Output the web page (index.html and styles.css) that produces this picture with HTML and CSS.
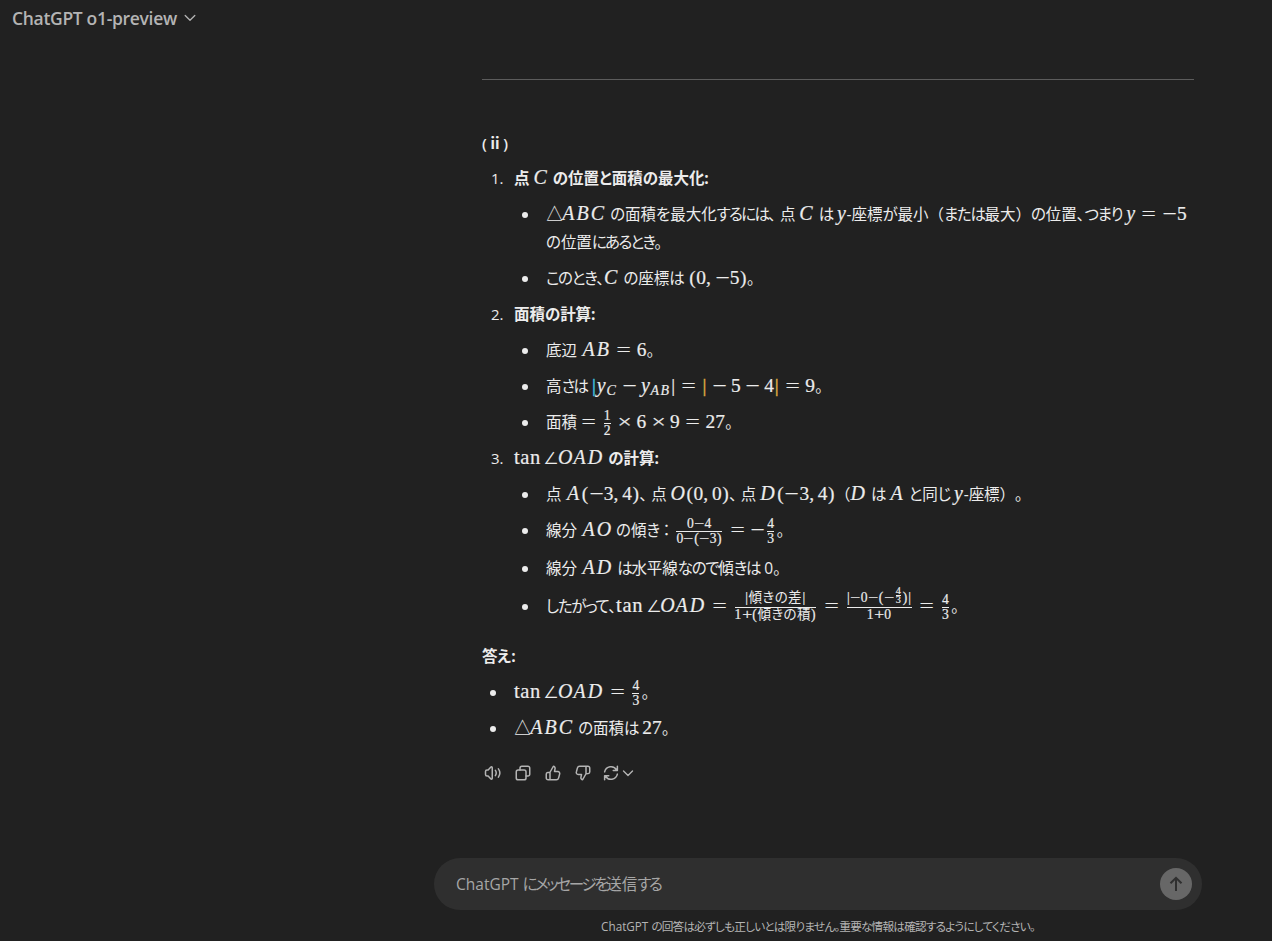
FILE: index.html
```
<!DOCTYPE html>
<html lang="ja">
<head>
  <meta charset="utf-8">
  <title>ChatGPT</title>
  <link rel="stylesheet" href="styles.css">
</head>
<body>
  <header class="header">
    <span class="model">ChatGPT o1-preview</span>
    <svg class="chevron" width="12" height="12" viewBox="0 0 12 12"><path d="M1.2 3.5 6 8.3l4.8-4.8"/></svg>
  </header>

  <main class="answer">
    <hr>
    <p class="line"><b class="roman">( <span>ⅱ</span> )</b></p>

    <ol class="steps">
      <li>
        <div class="line"><b>点 <span class="m"><i>C</i></span> の位置と面積の最大化:</b></div>
        <ul>
          <li>
            <div class="line"><span class="m"><span class="sym">△</span><i>ABC</i></span> の面積を最大化<span class="k wide">するには</span><span class="c">、</span>点 <span class="m"><i>C</i></span> <span class="k">は</span> <span class="m"><i class="y">y</i></span>-座標が最小<span class="full">（</span><span class="k">または</span>最大<span class="full">）</span>の位置、<span class="k">つまり</span> <span class="m"><i class="y">y</i><span class="rel">=</span><span class="neg">−</span>5</span></div>
            <div class="line">の位置<span class="k wide">にあるとき</span>。</div>
          </li>
          <li><div class="line"><span class="k">このとき</span>、<span class="m"><i>C</i></span> の座標は <span class="m"><span class="par">(</span>0<span class="comma">,</span><span class="neg">−</span>5<span class="par">)</span></span>。</div></li>
        </ul>
      </li>
      <li>
        <div class="line"><b>面積の計算:</b></div>
        <ul>
          <li><div class="line">底辺 <span class="m cap"><i>AB</i><span class="rel">=</span>6</span>。</div></li>
          <li><div class="line">高<span class="k wide">さは</span> <span class="m"><span class="bar cool">|</span><i class="y">y</i><sub><i>C</i></sub><span class="bin">−</span><i class="y">y</i><sub><i>AB</i></sub><span class="bar">|</span><span class="rel">=</span><span class="bar warm">|</span><span class="bin">−</span>5<span class="bin">−</span>4<span class="bar warm">|</span><span class="rel">=</span>9</span>。</div></li>
          <li><div class="line">面積 <span class="m"><span class="rel first">=</span><span class="frac"><span>1</span><span>2</span></span><span class="bin">×</span>6<span class="bin">×</span>9<span class="rel">=</span>27</span>。</div></li>
        </ul>
      </li>
      <li>
        <div class="line"><b><span class="m"><span class="fn">tan</span><span class="sym ang">∠</span><i><span class="o">O</span>AD</i></span> の計算:</b></div>
        <ul class="loose">
          <li><div class="line">点 <span class="m cap"><i>A</i><span class="par">(</span><span class="neg">−</span>3<span class="comma">,</span>4<span class="par">)</span></span><span class="c">、</span>点 <span class="m"><i><span class="o">O</span></i><span class="par">(</span>0<span class="comma">,</span>0<span class="par">)</span></span><span class="c">、</span>点 <span class="m"><i>D</i><span class="par">(</span><span class="neg">−</span>3<span class="comma">,</span>4<span class="par">)</span></span><span class="full">（</span><span class="m"><i>D</i></span> は <span class="m"><i>A</i></span> と同<span class="k">じ</span> <span class="m"><i class="y">y</i></span>-座標<span class="full">）。</span></div></li>
          <li><div class="line">線分 <span class="m cap"><i>A<span class="o">O</span></i></span> の傾<span class="k">き</span><span class="full">：</span><span class="m"><span class="frac"><span>0<span class="neg">−</span>4</span><span>0<span class="neg">−</span><span class="par">(</span><span class="neg">−</span>3<span class="par">)</span></span></span><span class="rel">=</span><span class="neg">−</span><span class="frac"><span>4</span><span>3</span></span></span>。</div></li>
          <li><div class="line">線分 <span class="m cap"><i>AD</i></span> <span class="k">は</span>水平線<span class="k">なので</span>傾<span class="k">きは</span> 0。</div></li>
          <li><div class="line"><span class="k">したがって</span>、<span class="m"><span class="fn">tan</span><span class="sym ang">∠</span><i><span class="o">O</span>AD</i><span class="rel">=</span><span class="frac tall"><span><span class="bar">|</span><span class="jp">傾きの差</span><span class="bar">|</span></span><span>1<span class="neg">+</span><span class="par">(</span><span class="jp">傾きの積</span><span class="par">)</span></span></span><span class="rel">=</span><span class="frac tall"><span><span class="bar">|</span><span class="neg">−</span>0<span class="neg">−</span><span class="par">(</span><span class="neg">−</span><span class="frac"><span>4</span><span>3</span></span><span class="par">)</span><span class="bar">|</span></span><span>1<span class="neg">+</span>0</span></span><span class="rel">=</span><span class="frac"><span>4</span><span>3</span></span></span>。</div></li>
        </ul>
      </li>
    </ol>

    <p class="line"><b>答え:</b></p>
    <ul class="result">
      <li><div class="line"><span class="m"><span class="fn">tan</span><span class="sym ang">∠</span><i><span class="o">O</span>AD</i><span class="rel">=</span><span class="frac"><span>4</span><span>3</span></span></span>。</div></li>
      <li><div class="line"><span class="m"><span class="sym">△</span><i>ABC</i></span> の面積<span class="k">は</span> <span class="m">27</span>。</div></li>
    </ul>

    <div class="actions">
      <svg viewBox="0 0 24 24"><path d="M11 4.900v14.200c0 1-1 1.400-1.800.8L5.500 16H4a2 2 0 0 1-2-2v-4a2 2 0 0 1 2-2h1.500L9.200 4.100c.8-.7 1.800-.2 1.800.8zM15.200 8.500c1.400 2.200 1.400 4.800 0 7M19.200 6.500c2.500 3.500 2.500 7.500 0 11"/></svg>
      <svg viewBox="0 0 24 24"><rect x="3" y="8" width="13" height="13" rx="2.500"/><path d="M8 8V5.500A2.500 2.500 0 0 1 10.500 3h8A2.500 2.500 0 0 1 21 5.500v8a2.500 2.500 0 0 1-2.500 2.500H16"/></svg>
      <svg viewBox="0 0 24 24"><path id="thumb" d="M8 11v10M12.500 3 8 11l-3 .2A2.200 2.200 0 0 0 3 13.500v5A2.500 2.500 0 0 0 5.500 21h11a3 3 0 0 0 2.900-2.200l1.400-5.200A2.600 2.600 0 0 0 18.300 10H14l.8-4.300A2.500 2.500 0 0 0 12.500 3z"/></svg>
      <svg viewBox="0 0 24 24"><use href="#thumb" transform="rotate(180 12 12)"/></svg>
      <span class="retry">
        <svg viewBox="0 0 24 24"><path d="M3.500 10.500A8.700 8.700 0 0 1 19.500 8M20.500 3v5.500H15M20.500 13.500A8.700 8.700 0 0 1 4.500 16M3.500 21v-5.500H9"/></svg>
        <svg class="chevron" viewBox="0 0 12 12"><path d="M1.500 4 6 8.500 10.500 4"/></svg>
      </span>
    </div>
  </main>

  <footer class="footer">
    <div class="prompt">
      <span class="placeholder">ChatGPT <span class="k">にメッセージを</span>送信<span class="k">する</span></span>
      <span class="send"><svg width="32" height="32" viewBox="0 0 32 32"><path d="M16 23V10M10.500 15.300 16 9.800l5.500 5.500"/></svg></span>
    </div>
    <p class="note">ChatGPT <span>の回答は必ずしも正しいとは限りません。重要な情報は確認するようにしてください。</span></p>
  </footer>
</body>
</html>
```
FILE: styles.css
```
* {
  box-sizing: border-box;
}
body {
  margin: 0;
  height: 941px;
  overflow: hidden;
  display: flex;
  flex-direction: column;
  background: #212121;
  color: #ececec;
  font-family: "Open Sans", "Noto Sans CJK JP", sans-serif;
  font-size: 16px;
  line-height: 28px;
  font-feature-settings: "palt";
}
p, ul, ol {
  margin: 0;
  padding: 0;
  list-style: none;
}
svg {
  fill: none;
  stroke: currentColor;
  stroke-width: 2;
  stroke-linecap: round;
  stroke-linejoin: round;
}

.header {
  display: flex;
  align-items: center;
  gap: 7px;
  height: 35px;
  padding-left: 12px;
  color: #b4b4b4;
  font-size: 17.500px;
  font-weight: 600;
  letter-spacing: -0.320px;
}
.header .chevron {
  stroke-width: 1.300;
}

.answer {
  width: 712px;
  margin-left: 482px;
  padding-top: 44px;
  flex: 1;
}
hr {
  margin: 0 0 49px;
  border: 0;
  border-top: 1px solid #5c5c5c;
}
.line {
  height: 28px;
  white-space: nowrap;
  font-size: 15.500px;
  letter-spacing: -0.050px;
}
.line b {
  font-weight: 700;
}
.line .roman {
  font-size: 15px;
  font-weight: 600;
  word-spacing: -1.500px;
}
.roman span {
  margin: 0 -1.500px 0 -1.500px;
}

/* narrow kana */
.k {
  letter-spacing: -1.300px;
}
.k.wide {
  letter-spacing: -1.700px;
}
.c {
  margin-right: 4px;
}
.full {
  font-feature-settings: normal;
  text-spacing-trim: space-all;
}

.steps {
  counter-reset: step;
  display: flex;
  flex-direction: column;
  gap: 8px;
  margin: 7px 0 22px;
  padding-left: 32px;
}
.steps > li {
  counter-increment: step;
  position: relative;
}
.steps > li::before {
  content: counter(step) ".";
  position: absolute;
  left: -23px;
  font-size: 15px;
}
ul {
  display: flex;
  flex-direction: column;
  gap: 8px;
}
.steps ul {
  margin-top: 8px;
  padding-left: 32px;
}
.loose li:nth-child(n+3) {
  margin-top: 2px;
}
.result {
  margin-top: 8px;
  padding-left: 32px;
}
ul > li {
  position: relative;
}
ul > li::before {
  content: "";
  position: absolute;
  left: -24px;
  top: 12px;
  width: 6px;
  height: 6px;
  border-radius: 50%;
  background: #ececec;
}

/* math */
.m {
  font-family: "Liberation Serif", serif;
  font-size: 19.400px;
  font-weight: 400;
  line-height: 0;
  letter-spacing: 0.050px;
  -webkit-text-stroke: 0.200px #ececec;
}
.m.cap {
  margin-left: 1.500px;
}
.m i {
  font-size: 1.030em;
  letter-spacing: 0.105em;
}
.m .o {
  letter-spacing: 0.050em;
}
.m i.y {
  letter-spacing: 0.040em;
}
.fn {
  font-size: 1.060em;
  letter-spacing: 0.030em;
}
.rel, .bin, .neg {
  display: inline-block;
  width: 0.778em;
  text-align: center;
  transform: scaleX(1.300);
}
.rel {
  margin: 0 0.278em;
}
.rel.first {
  margin-left: 0;
}
.bin {
  margin: 0 0.222em;
}
.par {
  display: inline-block;
  width: 0.389em;
  text-align: center;
}
.comma {
  margin-right: 0.190em;
}
.bar {
  display: inline-block;
  width: 0.278em;
  text-align: center;
}
.bar.cool {
  color: #3fb4dc;
  -webkit-text-stroke: 0.600px #3fb4dc;
}
.bar.warm {
  color: #d8a840;
  -webkit-text-stroke: 0.500px #d8a840;
}
.sym {
  display: inline-block;
  width: 0.889em;
  margin-left: -1px;
  font-family: "DejaVu Sans", sans-serif;
  font-weight: 200;
  -webkit-text-stroke: 0;
}
.ang {
  width: 0.750em;
  margin-left: 0.130em;
}
sub {
  font-size: 0.700em;
  vertical-align: -0.200em;
}
.frac {
  display: inline-flex;
  flex-direction: column;
  vertical-align: middle;
  margin: -10px 2.300px;
  font-size: 0.700em;
  text-align: center;
  line-height: 14px;
}
.frac > span {
  height: 14px;
}
.frac > span + span {
  height: 15px;
  border-top: 1px solid #ececec;
}
.frac.tall > span:first-child {
  height: 16px;
}
.frac.tall {
  margin-top: -13px;
  letter-spacing: 0.200px;
}
.frac .frac {
  margin: -8px 1.500px -2px;
  font-size: 0.750em;
}
.frac .frac > span {
  height: 8px;
  line-height: 8px;
}
.frac .frac > span + span {
  height: 9px;
}
.jp {
  font-family: "Noto Sans CJK JP", sans-serif;
  font-size: 13.500px;
  line-height: 0;
  letter-spacing: 0.400px;
  -webkit-text-stroke: 0;
}

.actions {
  display: flex;
  align-items: center;
  gap: 12px;
  margin: 22px 0 0 2px;
  color: #b4b4b4;
}
.actions svg {
  width: 18px;
  height: 18px;
}
.retry {
  display: flex;
  align-items: center;
  gap: 2px;
  margin-left: -2px;
}
.actions .retry .chevron {
  width: 12px;
  height: 12px;
  stroke-width: 1.400;
}

.footer {
  height: 83px;
  margin-left: 434px;
  width: 768px;
}
.prompt {
  display: flex;
  align-items: center;
  justify-content: space-between;
  height: 52px;
  padding: 0 10px 0 22px;
  border-radius: 26px;
  background: #2f2f2f;
}
.placeholder {
  color: #a6a6a6;
  font-size: 15.500px;
}
.placeholder .k {
  letter-spacing: -2.300px;
}
.send {
  width: 32px;
  height: 32px;
  border-radius: 50%;
  background: #676767;
  color: #2f2f2f;
}
.send svg {
  display: block;
  stroke-linecap: butt;
  stroke-linejoin: miter;
}
.note {
  margin-top: 8px;
  color: #b4b4b4;
  font-size: 11.700px;
  line-height: 16px;
  text-align: center;
}
.note span {
  letter-spacing: -0.850px;
}
```
